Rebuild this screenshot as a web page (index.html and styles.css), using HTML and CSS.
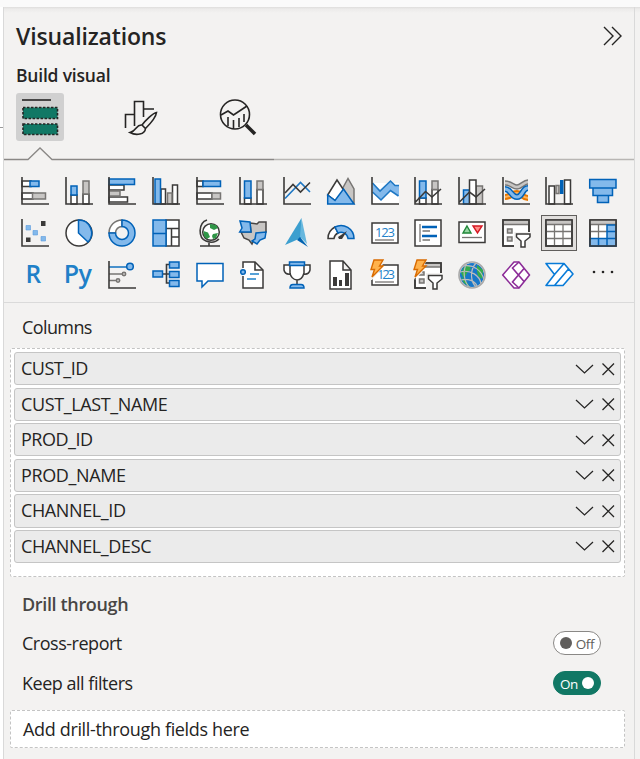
FILE: index.html
```html
<!DOCTYPE html>
<html lang="en">
<head>
<meta charset="utf-8">
<title>Visualizations</title>
<link rel="stylesheet" href="styles.css">
</head>
<body>
<div class="topbar"></div>
<div class="workspace">
<div class="gutter"></div>
<main class="panel">
<header class="panel-head">
  <h1><span>Visualizations</span></h1>
  <svg class="collapse" width="20" height="20" viewBox="0 0 20 20"><path d="M1 1L10 10L1 19M9 1L18 10L9 19"/></svg>
</header>
<h2><span>Build visual</span></h2>
<nav class="tabs">
  <div class="tab active"><svg width="48" height="48" viewBox="0 0 48 48"><path d="M6 7H35" stroke="#252423" stroke-width="1.6"/><g fill="#117865" stroke="#252423" stroke-width="1.6" stroke-dasharray="2.4 1.6"><path d="M7 14.5H41.500V25.500H7zM7 31H41.500V41.500H7z"/></g></svg></div>
  <div class="tab"><svg width="48" height="48" viewBox="0 0 48 48" fill="none" stroke="#252423" stroke-width="1.6"><path d="M9.500 35V21.500H18M18.500 33V8.500H27.500V24M27.500 16H38"/><path d="M40.500 19.500C37 20 29 28 26 32L29.500 35.500C34 31 40 24 40.500 19.500zM26 32C20 31 21 38 14 39.500C20 43 29 41.500 29.500 35.500" fill="#f3f2f1"/></svg></div>
  <div class="tab"><svg width="48" height="48" viewBox="0 0 48 48" fill="none" stroke="#252423" stroke-width="1.6"><circle cx="19" cy="21.500" r="14.500"/><path d="M5 22L12 18L17.500 22L31 13M12 24V33M17.500 27V36M23 25V34M28 21V29"/><path d="M30 32L39 41" stroke-width="3.500"/></svg></div>
</nav>
<svg class="tabline" width="630" height="16" viewBox="0 0 630 16"><path d="M270 13.500H630" stroke="#b8b6b4" stroke-width="1.600"/><path d="M0 13.500H24L36 2L48 13.500H270" stroke="#8a8886" stroke-width="1.300"/></svg>

<section class="gallery">
<svg viewBox="0 0 28 28"><path class="w" d="M1 4H10V9.500H1zM1 16H12V22H1z"/><path class="b" d="M9 4H18V9.500H9z"/><path class="g" d="M11.500 16H24.500V22H11.500z"/><path class="k" d="M1 0V27H28"/></svg>
<svg viewBox="0 0 28 28"><path class="w" d="M6 18H12V27H6zM18 17H24V27H18z"/><path class="b" d="M6 9H12V18H6z"/><path class="g" d="M18 4H24V17H18z"/><path class="k" d="M1 0V27H28"/></svg>
<svg viewBox="0 0 28 28"><path class="w" d="M1 8H16V13H1zM1 20H19.500V25H1z"/><path class="b" d="M1 2H26.500V7.500H1z"/><path class="g" d="M1 14H12V19H1z"/><path class="k" d="M1 0V27H28"/></svg>
<svg viewBox="0 0 28 28"><path class="w" d="M9 12H13.500V27H9zM20.500 8H25.500V27H20.500z"/><path class="b" d="M3 2H8.500V27H3z"/><path class="g" d="M15.500 16H20V27H15.500z"/><path class="k" d="M1 0V27H28"/></svg>
<svg viewBox="0 0 28 28"><path class="w" d="M1 4H7V9.500H1zM1 16H16V22H1z"/><path class="b" d="M7 4H24.500V9.500H7z"/><path class="g" d="M16 16H24.500V22H16z"/><path class="k" d="M1 0V27H28"/></svg>
<svg viewBox="0 0 28 28"><path class="w" d="M5.500 21H12V27H5.500zM18 12.500H24V27H18z"/><path class="b" d="M5.500 4H12V21H5.500z"/><path class="g" d="M18 4H24V12.500H18z"/><path class="k" d="M1 0V27H28"/></svg>
<svg viewBox="0 0 28 28"><path class="bl" d="M2 21.500L17.500 5.500L27 15"/><path class="k" d="M2 16L10 7.500L17.500 15L27 5.500"/><path class="k" d="M1 0V27H28"/></svg>
<svg viewBox="0 0 28 28"><path class="g" d="M13 16L21 1.500L27 12V26z"/><path class="w" d="M.7 18L10 3L18 15L10 25z"/><path class="b" d="M.7 18L8 23.500L16.500 12L27 27H.7z"/></svg>
<svg viewBox="0 0 28 28"><path fill="#fff" d="M1 6H28V26H1z"/><path fill="#83b9eb" d="M1.500 6L9 14L19.500 4L24 8.500H28V19L19.500 13.500L10 23L1.500 15z"/><path class="bl" d="M1.500 6L9 14L19.500 4L24 8.500H28M1.500 15L10 23L19.500 13.500L27.500 19"/><path class="k" d="M1 0V27H28"/></svg>
<svg viewBox="0 0 28 28"><path class="w" d="M5.500 21H12V27H5.500zM18 12.500H24V27H18z"/><path class="b" d="M5.500 4H12V21H5.500z"/><path class="g" d="M18 4H24V12.500H18z"/><path class="k" d="M1 25.500L11.500 14.500L18 20L27 12M1 0V27H28"/></svg>
<svg viewBox="0 0 28 28"><path class="b" d="M5.500 13H11.500V27H5.500z"/><path class="g" d="M18 9H24.500V27H18z"/><path class="w" d="M11.500 3H18V27H11.500z"/><path class="k" d="M1 25.500L11.500 15L18 20L27 12M1 0V27H28"/></svg>
<svg viewBox="0 0 28 28" fill="none"><path d="M3 20C9 20 10 16 15 16S20 21 26 21" stroke="#e87800" stroke-width="6"/><path d="M3 20C9 20 10 16 15 16S20 21 26 21" stroke="#ffb35c" stroke-width="2"/><path d="M3 6C9 6 11 10 15 10S22 5 26 5" stroke="#777" stroke-width="5.500"/><path d="M3 6C9 6 11 10 15 10S22 5 26 5" stroke="#c8c6c4" stroke-width="2.500"/><path d="M3 12C9 12 9 20 15 20S20 11 26 11" stroke="#0062b8" stroke-width="6"/><path d="M3 12C9 12 9 20 15 20S20 11 26 11" stroke="#83b9eb" stroke-width="3"/><path class="k" d="M1 0V27H28"/></svg>
<svg viewBox="0 0 28 28"><path class="w" d="M4 9H9.500V27H4zM19.500 3H25.500V27H19.500z"/><path class="g" d="M11 8.500H14V16.500H11z"/><path fill="#0062b8" d="M15 3H18.500V17H15z"/><path class="k" d="M1 0V27H28"/></svg>
<svg viewBox="0 0 28 28"><path class="b" d="M.7 2.500H27V11H.7zM4 11H23.500V18.500H4zM8.500 18.500H19.500V25.500H8.500z"/></svg>

<svg viewBox="0 0 28 28"><path class="k" d="M1 0V27H28"/><path fill="#83b9eb" stroke="#5a9bdd" stroke-width=".6" d="M5 6.500H9.500V11H5zM12 11.500H16.500V16H12zM20 17.500H24.500V22H20z"/><path fill="#3b3a39" d="M20 2H24.500V7H20zM5 18.500H9.500V23H5z"/></svg>
<svg viewBox="0 0 28 28"><circle class="w" cx="14" cy="14" r="13"/><path class="b" d="M13.500 1A13 13 0 0 1 23 23L13.500 14z"/></svg>
<svg viewBox="0 0 28 28"><path fill="#fff" stroke="#777573" stroke-width="1.500" d="M1 14A13 13 0 0 1 14 1V7.500A6.500 6.500 0 0 0 7.500 14z"/><path class="b" d="M14 1A13 13 0 1 1 1 14H7.500A6.500 6.500 0 1 0 14 7.500z"/></svg>
<svg viewBox="0 0 28 28"><path class="w" d="M14 1H27V27H14zM14 9.500H27M19.500 9.500V27M19.500 18H27"/><path class="b" d="M1 1H14V27H1zM1 14.500H14"/></svg>
<svg viewBox="0 0 28 28"><circle cx="15" cy="13" r="8.300" class="w"/><path fill="#2f9647" d="M14 5L20 6L22 9L18 11L14 9zM7.500 12L12 13.500L14 18L11 20L8 17zM17 15L22 14L20 19L17 20L16 17z"/><path class="k" d="M11 1C2 4 2 19 10 22C15 24 20 23 23 20M13 24V27M4 27H24"/></svg>
<svg viewBox="0 0 28 28"><path fill="#c8c6c4" stroke="#484644" stroke-width="1.500" d="M11 4L18 5L20 3H27V13L15 21L13 25L10 21L5 19L2 13H12z"/><path class="b" d="M1 2L11 3L12 13L.7 13L3 9zM27 13L26 19L21 21L18 25L13 22L16 20L17 14z"/></svg>
<svg viewBox="0 0 28 28"><path fill="#3c9fcf" d="M18.500-1L2 26L18 19z"/><path fill="#66b7de" d="M18.500-1L24 25L17 18z"/><path fill="#0063b1" d="M17 18L25 28L14 21z"/></svg>
<svg viewBox="0 0 28 28"><path class="w" d="M1 19.500A13 13 0 0 1 8 8L11 14A7 7 0 0 0 7 19.500z"/><path class="b" d="M8 8A13 13 0 0 1 27 19.500H21A7 7 0 0 0 11 14z"/><path fill="#3b3a39" d="M20 12L15 20H12L11 18z"/></svg>
<svg viewBox="0 0 28 28"><path class="w" d="M1 4H27V24H1z"/><text class="num" x="4" y="18" textLength="20">123</text><path class="gl" d="M4 21H23"/></svg>
<svg viewBox="0 0 28 28"><path class="w" d="M1 1H27V27H1z"/><path class="gl" d="M6 5V23M8.500 12H16M8.500 21H16"/><path stroke="#0062b8" stroke-width="2.600" d="M8 8H23M8 17H23"/></svg>
<svg viewBox="0 0 28 28"><path class="w" d="M1 3H27V23.500H1z"/><path fill="#97d6a3" stroke="#218739" stroke-width="1.400" d="M9 7L13 14H5z"/><path fill="#ff8f87" stroke="#d51925" stroke-width="1.400" d="M15 7H24L19.500 14z"/><path class="gl" d="M4 18.500H24"/></svg>
<svg viewBox="0 0 28 28"><path class="w" d="M1 1H27V27H1z"/><path class="g" d="M1 1H27V5.500H1zM5.500 10H10V14H5.500zM5.500 18H10V22H5.500z"/><path class="k" d="M27 13V1H1V27H14"/><path fill="#f3f2f1" d="M12 13H29V29H12z"/><path class="w" d="M14.500 15H28V18L23 22V28H19V22L14.500 18z"/></svg>
<span class="selected"><svg viewBox="0 0 28 28"><path class="w" d="M1 1H27V27H1z"/><path fill="#c8c6c4" d="M1 1H27V5H1z"/><path class="gl" d="M1 5.500H27M1 12.500H27M1 19.500H27M9.500 6V27M18 6V27"/><path class="k" d="M1 1H27V27H1z"/></svg></span>
<svg viewBox="0 0 28 28"><path class="w" d="M1 1H27V27H1z"/><path fill="#c8c6c4" d="M1 1H27V5H1z"/><path class="gl" d="M1 5.500H27M1 12.500H18M9.500 6V19"/><path class="b" d="M18 6H27V27H1V19.500H18zM18 12.500H27M18 19.500H27M9.500 19.500V27M18 19.500V27"/><path class="k" d="M1 1H27V27H1z"/></svg>

<span class="script">R</span>
<span class="script py">Py</span>
<svg viewBox="0 0 28 28"><path class="gl" d="M1 13H14M1 19.500H8"/><circle class="g" cx="16" cy="13" r="1.700"/><circle class="g" cx="10" cy="19.500" r="1.700"/><path class="bl" d="M1 6H19"/><circle class="b" cx="22" cy="5.500" r="3.300"/><path class="k" d="M1 0V27H28"/></svg>
<svg viewBox="0 0 28 28"><path class="k" d="M10 13H17M17 3.500H14.500V22H17"/><path class="b" d="M1 10H10.500V16H1zM17.500 1H27V7H17.500zM17.500 10.500H27V16.500H17.500zM17.500 19.500H27V25.500H17.500z"/></svg>
<svg viewBox="0 0 28 28"><path fill="#fff" stroke="#0062b8" stroke-width="1.500" d="M1 2.500H27V20H12L6 26V20H1z"/></svg>
<svg viewBox="0 0 28 28"><path class="w" d="M4 7V1H16L24 9V27H4V15"/><path class="k" d="M16 1V9H24"/><circle class="b" cx="4" cy="11" r="2.300"/><path stroke="#1f83ca" stroke-width="1.500" d="M11 13H20M8 18H17"/></svg>
<svg viewBox="0 0 28 28"><path class="w" d="M7 4H1V9Q2 14 8 13M21 4H27V9Q26 14 20 13M7 4H21V12Q19 19 14 19Q8 18 7 12zM14 19V24"/><path class="b" d="M6.500 1H21.500V4.500H6.500zM7 27Q7 23.500 10 23.500H18Q21 23.500 21 27z"/></svg>
<svg viewBox="0 0 28 28"><path class="w" d="M3 0H16L24 9V28H3zM16 0V9H24"/><path fill="#3b3a39" d="M6 16H10V25H6zM12 19H15V25H12zM18 12H22V25H18z"/></svg>
<svg viewBox="0 0 28 28"><path class="w" d="M1 4H27V24H1z"/><text class="num" x="6" y="18" textLength="18">123</text><path class="gl" d="M4 21H23"/><path fill="#f3f2f1" d="M-1 0H13L9 10L1 19H-1z"/><path class="bolt" d="M3-1H12L8.500 5H12L1 16L3.500 8.500H0z"/></svg>
<svg viewBox="0 0 28 28"><path class="w" d="M1 2H27V27H1z"/><path class="g" d="M9 2H27V6H9zM5.500 11H10V14H5.500zM5.500 18H10V22H5.500z"/><path class="k" d="M27 13V2H8M1 19V27H14"/><path fill="#f3f2f1" d="M12 12H29V29H12zM-1 0H12L8 12L0 18z"/><path class="w" d="M14.500 14.500H28V18L23 22V28H19V22L14.500 18z"/><path class="bolt" d="M3-1H12L8.500 5H12L1 16L3.500 8.500H0z"/></svg>
<svg viewBox="0 0 28 28" fill="none"><circle cx="14" cy="14" r="12" fill="#1877c9"/><path fill="#34ac4c" d="M3 12L6 6L11 4L13 8L9 12L6 18zM19 4L25 9L24 18L20 15L19 10zM3 16L8 20L12 26L6 22z"/><path stroke="#bcbcbc" stroke-width="1.200" d="M5 5C16 3 24 10 26 19M2 11C13 8 22 15 23 23M3 19C10 17 17 20 19 25M9 2C4 10 6 21 12 27M18 2C11 10 13 21 18 26"/><circle cx="14" cy="14" r="13" stroke="#aaa" stroke-width="1.700"/></svg>
<svg viewBox="0 0 28 28"><path fill="#fff" stroke="#8c2c98" stroke-width="1.600" stroke-linejoin="round" d="M12 1H17L27.500 14L17 27H12L.7 14z"/><path fill="none" stroke="#8c2c98" stroke-width="1.600" d="M17 1L10.500 7L22 20.500M17 27L10.500 21L22 7.500"/></svg>
<svg viewBox="0 0 28 28"><path fill="#fff" stroke="#087bd8" stroke-width="1.600" stroke-linejoin="round" d="M1 2.500H19L28 13L18 24.500H1L9.500 13.500zM9.500 13.500L19 2.500M9.500 24.500L23.500 8"/></svg>
<svg viewBox="0 0 28 28"><g fill="#252423"><circle cx="5" cy="11" r="1.300"/><circle cx="14" cy="11" r="1.300"/><circle cx="23" cy="11" r="1.300"/></g></svg>
</section>

<section class="fields">
<h3><span>Columns</span></h3>
<ul class="well">
<li><span class="field">CUST_ID</span><svg width="42" height="14" viewBox="0 0 42 14"><path d="M1 3L9.500 11L18 3M27.500 1.500L39 13M39 1.500L27.500 13"/></svg></li>
<li><span class="field name">CUST_LAST_NAME</span><svg width="42" height="14" viewBox="0 0 42 14"><path d="M1 3L9.500 11L18 3M27.500 1.500L39 13M39 1.500L27.500 13"/></svg></li>
<li><span class="field">PROD_ID</span><svg width="42" height="14" viewBox="0 0 42 14"><path d="M1 3L9.500 11L18 3M27.500 1.500L39 13M39 1.500L27.500 13"/></svg></li>
<li><span class="field name">PROD_NAME</span><svg width="42" height="14" viewBox="0 0 42 14"><path d="M1 3L9.500 11L18 3M27.500 1.500L39 13M39 1.500L27.500 13"/></svg></li>
<li><span class="field name">CHANNEL_ID</span><svg width="42" height="14" viewBox="0 0 42 14"><path d="M1 3L9.500 11L18 3M27.500 1.500L39 13M39 1.500L27.500 13"/></svg></li>
<li><span class="field name">CHANNEL_DESC</span><svg width="42" height="14" viewBox="0 0 42 14"><path d="M1 3L9.500 11L18 3M27.500 1.500L39 13M39 1.500L27.500 13"/></svg></li>
</ul>
</section>

<section class="drill">
<h3><span>Drill through</span></h3>
<div class="option"><span>Cross-report</span><div class="toggle"><i></i><b>Off</b></div></div>
<div class="option"><span>Keep all filters</span><div class="toggle on"><b>On</b><i></i></div></div>
<div class="drop"><span>Add drill-through fields here</span></div>
</section>
</main>
</div>
</body>
</html>
```
FILE: styles.css
```css
* { box-sizing: border-box; }
body { margin: 0; height: 759px; overflow: hidden; background: #f3f2f1; color: #252423; font: 18px/24px "Open Sans", "Noto Sans", sans-serif; }
h1, h2, h3, ul { margin: 0; padding: 0; }
.topbar { height: 7px; background: #fafafa; }
.workspace { display: flex; height: 752px; background: linear-gradient(#dedddc, #ecebea 2px, #f3f2f1 6px); }
.gutter { width: 3px; background: linear-gradient(#999, #999) 0 120px / 3px 1px no-repeat #fff; }
.panel { width: 632px; border: solid #d9d9d9; border-width: 0 1px; }
.panel-head { display: flex; justify-content: space-between; padding: 14px 11px 0 12px; height: 56px; }
h1 { font-size: 23px; line-height: 30px; font-weight: 550; letter-spacing: -.15px; }
.collapse { margin-top: 5px; fill: none; stroke: #252423; stroke-width: 1.4; }
h2 { padding-left: 12px; height: 30px; font-size: 17.5px; line-height: 25px; font-weight: 550; letter-spacing: -.2px; }
.tabs { display: flex; gap: 52px; padding-left: 12px; height: 48px; }
.tab { width: 48px; height: 48px; border-radius: 3px; }
.active { background: #d0d0d0; }
.tab svg { display: block; }
.tabline { display: block; margin-top: 5px; fill: none; }
.gallery { display: grid; grid-template-columns: repeat(14, 43.72px); grid-template-rows: repeat(3, 42px); place-items: center; height: 141px; padding: 8px 0 0 9px; border-bottom: 1px solid #dadada; }
.gallery svg { display: block; width: 28px; height: 28px; overflow: visible; }
.selected { width: 36px; height: 36px; padding: 3px; border: 1px solid #605e5c; background: #e1dfdd; }
.w { fill: #fff; stroke: #3b3a39; stroke-width: 1.5; }
.b { fill: #83b9eb; stroke: #0062b8; stroke-width: 1.5; }
.g { fill: #c8c6c4; stroke: #777573; stroke-width: 1.5; }
.k { fill: none; stroke: #3b3a39; stroke-width: 1.6; }
.bl { fill: none; stroke: #1f78c4; stroke-width: 1.6; }
.gl { fill: none; stroke: #777573; stroke-width: 1.3; }
.bolt { fill: #ffb24c; stroke: #d96b00; stroke-width: 1.4; }
.num { font: 13px "Open Sans", sans-serif; fill: #1f83ca; }
.script { padding: 0 3px 2px 0; color: #2080c8; font-size: 24.5px; line-height: 28px; font-weight: 650; }
.py { padding: 0 2px 5px 0; font-size: 25px; letter-spacing: -.5px; }
.fields { height: 274px; padding: 12px 9px 0 6px; }
h3 { height: 33px; padding-left: 12px; font-size: 18px; line-height: 24px; font-weight: 400; letter-spacing: -.6px; }
.well { display: flex; flex-direction: column; gap: 2.4px; height: 229px; padding: 3px; list-style: none; background: #fff; border: 1px dashed #c4c4c4; border-radius: 2px; }
.well li { display: flex; justify-content: space-between; align-items: center; height: 33.2px; padding: 0 3px 0 6px; border: 1px solid #c5c5c5; border-radius: 3px; background: #ebebeb; }
.well svg { fill: none; stroke: #252423; stroke-width: 1.25; }
.field { padding-bottom: 1px; letter-spacing: -.5px; }
.name { letter-spacing: -.38px; }
.drill { padding: 15px 9px 0 6px; }
.drill h3 { height: 31px; color: #484644; font-weight: 550; letter-spacing: -.35px; }
.option { display: flex; justify-content: space-between; align-items: center; height: 40px; padding: 0 24px 0 12px; letter-spacing: -.48px; }
.option > span { padding-bottom: 1px; }
.toggle { display: flex; align-items: center; justify-content: center; gap: 4px; width: 48px; height: 24px; border: 1px solid #8a8886; border-radius: 12px; background: #fff; color: #605e5c; }
.toggle i { width: 12px; height: 12px; border-radius: 50%; background: #605e5c; }
.toggle b { font-size: 13.5px; line-height: 20px; font-weight: 400; padding-top: 2px; letter-spacing: -.3px; }
.on { border-color: #117865; background: #117865; color: #fff; }
.on i { background: #fff; }
.drop { display: flex; align-items: center; height: 38px; margin-top: 7px; padding-left: 12px; background: #fff; border: 1px dashed #c4c4c4; border-radius: 2px; letter-spacing: -.34px; }
```
